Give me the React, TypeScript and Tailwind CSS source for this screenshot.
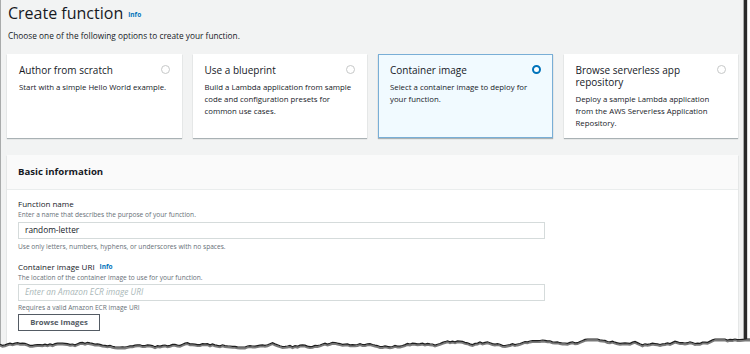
import React from 'react';

const font = { fontFamily: '"Open Sans", "Noto Sans", Arial, sans-serif' };

const tiles = [
  { title: 'Author from scratch', desc: 'Start with a simple Hello World example.', selected: false },
  { title: 'Use a blueprint', desc: 'Build a Lambda application from sample code and configuration presets for common use cases.', selected: false },
  { title: 'Container image', desc: 'Select a container image to deploy for your function.', selected: true },
  { title: 'Browse serverless app repository', desc: 'Deploy a sample Lambda application from the AWS Serverless Application Repository.', selected: false },
];

// jagged "torn paper" edge along the bottom of the screenshot
function tornPoints(width: number) {
  let seed = 11;
  const rnd = () => {
    seed = (seed * 9301 + 49297) % 233280;
    return seed / 233280;
  };
  const pts: [number, number][] = [];
  let y = 11;
  for (let x = 0; x <= width; x += 2.5) {
    y += (rnd() - 0.5) * 2.4;
    if (y < 6) y = 6;
    if (y > 14) y = 14;
    pts.push([x, y]);
  }
  return pts;
}

const Radio: React.FC<{ on: boolean }> = ({ on }) =>
  on ? (
    <span className="mt-[1px] h-[9px] w-[9px] shrink-0 rounded-full border-[2.5px] border-[#0073bb] bg-white" />
  ) : (
    <span className="mt-[1px] h-[9px] w-[9px] shrink-0 rounded-full border border-[#c6c8c8] bg-white" />
  );

const Info = () => <span className="ml-[5px] text-[6.5px] font-bold text-[#0073bb]">Info</span>;

export default function App() {
  const pts = tornPoints(750);
  const line = pts.map(([x, y]) => `${x},${y.toFixed(1)}`).join(' ');
  const shadow = pts.map(([x, y]) => `${x},${(y + 1.4).toFixed(1)}`).join(' ');
  return (
    <div className="relative h-[354px] w-[750px] overflow-hidden bg-white" style={font}>
      <div className="h-[354px] w-[744px] border-x border-[#a9abab] bg-[#f2f3f3] pl-[6px] pr-[5px] shadow-[3px_0_1px_#2a2a2a]">
        {/* header */}
        <div className="flex h-[24px] items-end">
          <h1 className="pl-[1px] text-[16px] leading-[22px] text-[#16191f]">Create function</h1>
          <span className="mb-[1px]"><Info /></span>
        </div>
        <p className="mt-[6px] pl-[1px] text-[8.3px] leading-[12px] text-[#16191f]">
          Choose one of the following options to create your function.
        </p>

        {/* option tiles */}
        <div className="mt-[12px] grid grid-cols-4 gap-[11px]">
          {tiles.map((t) => (
            <div
              key={t.title}
              className={`h-[84px] px-[11px] pt-[9px] shadow-[0_1px_1px_rgba(0,28,36,0.3)] ${
                t.selected ? 'border border-[#79aed6] bg-[#f1faff]' : 'border border-transparent bg-white'
              }`}
            >
              <div className="flex items-start justify-between gap-2">
                <div className="text-[10px] leading-[12px] text-[#16191f]">{t.title}</div>
                <Radio on={t.selected} />
              </div>
              <div className="mt-[5px] text-[7.8px] leading-[12px] text-[#16191f]">{t.desc}</div>
            </div>
          ))}
        </div>

        {/* basic information */}
        <div className="mt-[17px] bg-white shadow-[0_1px_1px_rgba(0,28,36,0.3)]">
          <div className="flex h-[35px] items-center border-b border-[#eaeded] bg-[#fafafa] px-[11px]">
            <span className="text-[9.6px] font-bold text-[#16191f]">Basic information</span>
          </div>
          <div className="px-[11px] pt-[8px] pb-[20px]">
            <div className="text-[8px] leading-[12px] text-[#16191f]">Function name</div>
            <div className="text-[6.6px] leading-[9px] text-[#687078]">Enter a name that describes the purpose of your function.</div>
            <div className="mt-[3px] flex h-[17px] w-[527px] items-center border border-[#d5dbdb] px-[6px] text-[8.3px] text-[#16191f]">
              random-letter
            </div>
            <div className="mt-[3px] text-[6.6px] leading-[9px] text-[#687078]">
              Use only letters, numbers, hyphens, or underscores with no spaces.
            </div>

            <div className="mt-[10px] flex items-center text-[8px] leading-[12px] text-[#16191f]">
              Container image URI
              <Info />
            </div>
            <div className="text-[6.6px] leading-[9px] text-[#687078]">The location of the container image to use for your function.</div>
            <div className="mt-[2px] flex h-[17px] w-[527px] items-center border border-[#d5dbdb] px-[6px] text-[8.3px] italic text-[#aab7b8]">
              Enter an Amazon ECR image URI
            </div>
            <div className="mt-[2px] text-[6.6px] leading-[9px] text-[#687078]">Requires a valid Amazon ECR image URI</div>
            <button className="mt-[2px] flex h-[17px] w-[82px] items-center justify-center border border-[#545b64] bg-white text-[7.7px] font-bold text-[#545b64]">
              Browse images
            </button>
          </div>
        </div>
      </div>

      {/* torn bottom edge */}
      <svg className="absolute left-0 top-[333px]" width="750" height="21" viewBox="0 0 750 21">
        <polygon points={`0,21 ${line} 750,21`} fill="#ffffff" />
        <polyline points={shadow} fill="none" stroke="#7a7a7a" strokeWidth="2" />
        <polyline points={line} fill="none" stroke="#1e1e1e" strokeWidth="1.2" />
      </svg>
    </div>
  );
}
